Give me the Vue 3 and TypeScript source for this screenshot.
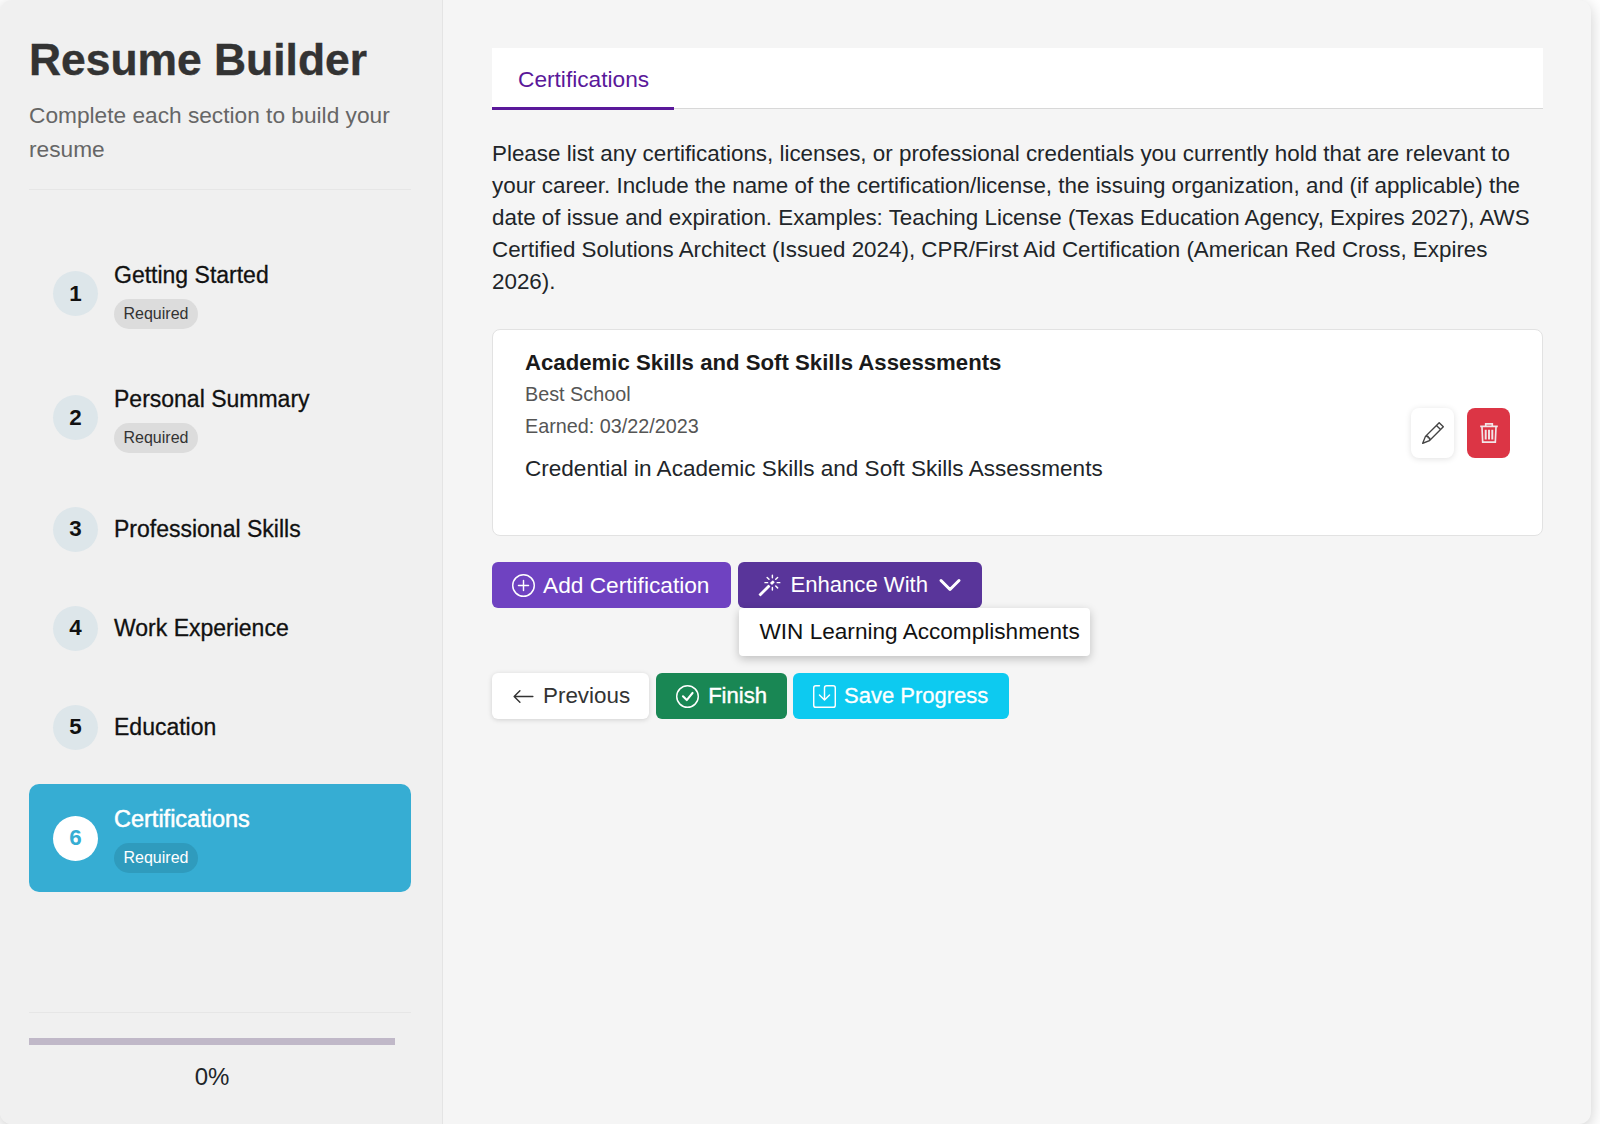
<template>
  <div class="app-card">
    <aside class="sidebar">
      <header class="side-head">
        <h1>Resume Builder</h1>
        <p>Complete each section to build your resume</p>
      </header>

      <nav class="steps">
        <div
          v-for="(step, i) in steps"
          :key="step.title"
          class="step"
          :class="{ active: step.active }"
        >
          <span class="step-num">{{ i + 1 }}</span>
          <div class="step-text">
            <span class="step-title">{{ step.title }}</span>
            <span v-if="step.required" class="badge">Required</span>
          </div>
        </div>
      </nav>

      <div class="side-foot">
        <div class="track"></div>
        <div class="percent">0%</div>
      </div>
    </aside>

    <main class="content">
      <div class="tabs">
        <span class="tab">Certifications</span>
      </div>

      <p class="intro">
        Please list any certifications, licenses, or professional credentials you currently hold that are relevant to your career. Include the name of the certification/license, the issuing organization, and (if applicable) the date of issue and expiration. Examples: Teaching License (Texas Education Agency, Expires 2027), AWS Certified Solutions Architect (Issued 2024), CPR/First Aid Certification (American Red Cross, Expires 2026).
      </p>

      <section class="cert">
        <div class="cert-body">
          <h2>Academic Skills and Soft Skills Assessments</h2>
          <div class="meta">Best School</div>
          <div class="meta">Earned: 03/22/2023</div>
          <p>Credential in Academic Skills and Soft Skills Assessments</p>
        </div>
        <div class="cert-actions">
          <button class="icon-btn edit">
            <svg viewBox="0 0 16 16" width="22" height="22" fill="currentColor"><path d="M12.146.146a.5.5 0 0 1 .708 0l3 3a.5.5 0 0 1 0 .708l-10 10a.5.5 0 0 1-.168.11l-5 2a.5.5 0 0 1-.65-.65l2-5a.5.5 0 0 1 .11-.168zM11.207 2.5 13.5 4.793 14.793 3.5 12.5 1.207zm1.586 3L10.5 3.207 4 9.707V10h.5a.5.5 0 0 1 .5.5v.5h.5a.5.5 0 0 1 .5.5v.5h.293zm-9.761 5.175-.106.106-1.528 3.821 3.821-1.528.106-.106A.5.5 0 0 1 5 12.5V12h-.5a.5.5 0 0 1-.5-.5V11h-.5a.5.5 0 0 1-.468-.325"/></svg>
          </button>
          <button class="icon-btn remove">
            <svg viewBox="0 0 16 16" width="22" height="22" fill="none" stroke="currentColor" stroke-width="1.2"><path d="M1.6 3.2h12.8M5.6 3V1.4h4.8V3M2.9 3.6l.5 11h9.2l.5-11"/><path stroke-width="1.4" d="M5.6 5.6v7.2M8 5.6v7.2M10.4 5.6v7.2"/></svg>
          </button>
        </div>
      </section>

      <div class="row-add">
        <button class="btn add">
          <svg viewBox="0 0 16 16" width="23" height="23" fill="currentColor"><path d="M8 15A7 7 0 1 1 8 1a7 7 0 0 1 0 14m0 1A8 8 0 1 0 8 0a8 8 0 0 0 0 16"/><path d="M8 4a.5.5 0 0 1 .5.5v3h3a.5.5 0 0 1 0 1h-3v3a.5.5 0 0 1-1 0v-3h-3a.5.5 0 0 1 0-1h3v-3A.5.5 0 0 1 8 4"/></svg>
          Add Certification
        </button>
        <div class="enhance">
          <button class="btn enhance-btn">
            <svg viewBox="0 0 16 16" width="23" height="23" fill="currentColor"><path d="M9.5 2.672a.5.5 0 1 0 1 0V.843a.5.5 0 0 0-1 0zm4.5.035A.5.5 0 0 0 13.293 2L12 3.293a.5.5 0 1 0 .707.707zM7.293 4A.5.5 0 1 0 8 3.293L6.707 2A.5.5 0 0 0 6 2.707zm-.621 2.5a.5.5 0 1 0 0-1H4.843a.5.5 0 1 0 0 1zm8.485 0a.5.5 0 1 0 0-1h-1.829a.5.5 0 0 0 0 1zM13.293 10A.5.5 0 1 0 14 9.293L12.707 8a.5.5 0 1 0-.707.707zM9.5 11.157a.5.5 0 0 0 1 0V9.328a.5.5 0 0 0-1 0zm1.854-5.097a.5.5 0 0 0 0-.706l-.708-.708a.5.5 0 0 0-.707 0L8.646 5.94a.5.5 0 0 0 0 .707l.708.708a.5.5 0 0 0 .707 0l1.293-1.293Zm-3 3a.5.5 0 0 0 0-.706l-.708-.708a.5.5 0 0 0-.707 0L.646 13.94a.5.5 0 0 0 0 .707l.708.708a.5.5 0 0 0 .707 0z"/></svg>
            Enhance With
            <svg class="chev" viewBox="0 0 16 16" width="24" height="24" fill="currentColor" stroke="currentColor" stroke-width="1"><path d="M1.646 4.646a.5.5 0 0 1 .708 0L8 10.293l5.646-5.647a.5.5 0 0 1 .708.708l-6 6a.5.5 0 0 1-.708 0l-6-6a.5.5 0 0 1 0-.708"/></svg>
          </button>
          <div class="menu">WIN Learning Accomplishments</div>
        </div>
      </div>

      <div class="row-nav">
        <button class="btn prev">
          <svg viewBox="0 0 16 16" width="23" height="23" fill="currentColor"><path d="M15 8a.5.5 0 0 0-.5-.5H2.707l3.147-3.146a.5.5 0 1 0-.708-.708l-4 4a.5.5 0 0 0 0 .708l4 4a.5.5 0 0 0 .708-.708L2.707 8.5H14.5A.5.5 0 0 0 15 8"/></svg>
          Previous
        </button>
        <button class="btn finish">
          <svg viewBox="0 0 16 16" width="23" height="23" fill="currentColor"><path d="M8 15A7 7 0 1 1 8 1a7 7 0 0 1 0 14m0 1A8 8 0 1 0 8 0a8 8 0 0 0 0 16"/><path d="m10.97 4.97-.02.022-3.473 4.425-2.093-2.094a.75.75 0 0 0-1.06 1.06L6.97 11.03a.75.75 0 0 0 1.079-.02l3.992-4.99a.75.75 0 0 0-1.071-1.05"/></svg>
          Finish
        </button>
        <button class="btn save">
          <svg viewBox="0 0 16 16" width="23" height="23" fill="currentColor"><path d="M2 1a1 1 0 0 0-1 1v12a1 1 0 0 0 1 1h12a1 1 0 0 0 1-1V2a1 1 0 0 0-1-1H9.5a1 1 0 0 0-1 1v7.293l2.646-2.647a.5.5 0 0 1 .708.708l-3.5 3.5a.5.5 0 0 1-.708 0l-3.5-3.5a.5.5 0 1 1 .708-.708L7.5 9.293V2a2 2 0 0 1 2-2H14a2 2 0 0 1 2 2v12a2 2 0 0 1-2 2H2a2 2 0 0 1-2-2V2a2 2 0 0 1 2-2h2.5a.5.5 0 0 1 0 1z"/></svg>
          Save Progress
        </button>
      </div>
    </main>
  </div>
</template>

<script setup lang="ts">
type Step = {
  title: string
  required?: boolean
  active?: boolean
}

const steps: Step[] = [
  { title: 'Getting Started', required: true },
  { title: 'Personal Summary', required: true },
  { title: 'Professional Skills' },
  { title: 'Work Experience' },
  { title: 'Education' },
  { title: 'Certifications', required: true, active: true }
]
</script>

<style>
html,
body {
  margin: 0;
  background: #ffffff;
}
</style>

<style scoped>
.app-card {
  display: flex;
  width: 1591px;
  height: 1124px;
  border-radius: 12px;
  overflow: hidden;
  background: #f5f5f5;
  box-shadow: 0 4px 16px rgba(0, 0, 0, 0.2);
  font-family: "Liberation Sans", Arial, sans-serif;
  color: #212529;
}

.sidebar {
  display: flex;
  flex-direction: column;
  box-sizing: border-box;
  width: 443px;
  flex-shrink: 0;
  padding: 33px 31px 0 29px;
  background: #f0f0f0;
  border-right: 1px solid #e4e4e4;
}

.side-head {
  padding-bottom: 23px;
  border-bottom: 1px solid #e6e6e6;
}

.side-head h1 {
  margin: 0 0 12px;
  font-size: 44.4px;
  line-height: 53px;
  font-weight: 700;
  color: #333333;
  -webkit-text-stroke: 0.4px currentColor;
}

.side-head p {
  margin: 0;
  font-size: 22.7px;
  line-height: 34px;
  color: #666666;
}

.steps {
  display: flex;
  flex-direction: column;
  gap: 15px;
  margin-top: 49px;
}

.step {
  display: flex;
  align-items: center;
  gap: 16px;
  min-height: 84px;
  padding: 0 24px;
  border-radius: 10px;
  color: #111111;
}

.step:has(.badge) {
  min-height: 109px;
}

.step.active {
  min-height: 108px;
}

.step-num {
  display: flex;
  align-items: center;
  justify-content: center;
  width: 45px;
  height: 45px;
  flex-shrink: 0;
  border-radius: 50%;
  background: #dde6ea;
  font-size: 22.4px;
  font-weight: 700;
}

.step-text {
  display: flex;
  flex-direction: column;
  align-items: flex-start;
  gap: 9px;
}

.step-text:has(.badge) {
  padding-top: 1px;
}

.step-title {
  font-size: 23px;
  line-height: 30px;
  -webkit-text-stroke: 0.3px currentColor;
}

.badge {
  padding: 0 9.5px;
  border-radius: 15px;
  background: #dcdcdc;
  font-size: 16px;
  line-height: 30px;
  color: #333333;
}

.step.active {
  background: #36add3;
  color: #ffffff;
}

.active .step-num {
  background: #ffffff;
  color: #36add3;
}

.active .step-title {
  font-size: 23.5px;
  -webkit-text-stroke: 0.5px currentColor;
}

.active .badge {
  background: #2f9bbd;
  color: #ffffff;
}

.side-foot {
  margin-top: auto;
  padding: 25px 0 32px;
  border-top: 1px solid #e6e6e6;
}

.track {
  width: 366px;
  height: 7px;
  background: #c0b8c8;
}

.percent {
  width: 366px;
  margin-top: 17px;
  text-align: center;
  font-size: 24px;
  line-height: 30px;
}

.content {
  flex: 1;
  padding: 48px 48px 0 49px;
  min-width: 0;
}

.tabs {
  display: flex;
  height: 61px;
  box-sizing: border-box;
  background: #ffffff;
  border-bottom: 1px solid #d8d8d8;
}

.tab {
  display: flex;
  align-items: center;
  box-sizing: border-box;
  height: 62px;
  padding: 3px 25px 0 26px;
  border-bottom: 3px solid #5a189a;
  font-size: 22.7px;
  color: #5a189a;
}

.intro {
  margin: 29px 0 0;
  font-size: 22.4px;
  line-height: 32px;
}

.cert {
  display: flex;
  align-items: center;
  justify-content: space-between;
  box-sizing: border-box;
  height: 207px;
  margin-top: 31px;
  padding: 0 32px;
  background: #ffffff;
  border: 1px solid #e2e2e2;
  border-radius: 8px;
}

.cert-body {
  align-self: flex-start;
  padding-top: 20px;
}

.cert-body h2 {
  margin: 0 0 2px;
  font-size: 22.2px;
  line-height: 26px;
  font-weight: 700;
  color: #1a1a1a;
}

.meta {
  font-size: 19.8px;
  line-height: 32px;
  color: #555555;
}

.cert-body p {
  margin: 11px 0 0;
  font-size: 22.56px;
  line-height: 32px;
}

.cert-actions {
  display: flex;
  gap: 13px;
}

.icon-btn {
  display: flex;
  align-items: center;
  justify-content: center;
  width: 43px;
  height: 50px;
  padding: 0;
  border: none;
  border-radius: 8px;
}

.edit {
  background: #ffffff;
  color: #444444;
  box-shadow: 0 1px 6px rgba(0, 0, 0, 0.12);
}

.remove {
  background: #dc3545;
  color: #f2e6e8;
}

.row-add {
  display: flex;
  gap: 7px;
  margin-top: 26px;
}

.row-nav {
  display: flex;
  gap: 7px;
  margin-top: 65px;
}

.btn {
  display: inline-flex;
  align-items: center;
  gap: 9px;
  height: 46px;
  padding: 0 20px;
  border: none;
  border-radius: 6px;
  font-family: inherit;
  font-size: 22.7px;
  color: #ffffff;
}

.add {
  gap: 8px;
  padding-right: 22px;
  background: #6f42c1;
}

.enhance {
  position: relative;
}

.enhance-btn {
  background: #59359a;
  font-size: 22.1px;
}

.chev {
  margin-left: 1px;
}

.menu {
  position: absolute;
  top: 46px;
  left: 1px;
  box-sizing: border-box;
  width: 351px;
  height: 48px;
  padding: 0 10px 0 20px;
  display: flex;
  align-items: center;
  white-space: nowrap;
  background: #ffffff;
  border-radius: 4px;
  box-shadow: 0 3px 10px rgba(0, 0, 0, 0.22);
  font-size: 22.6px;
  color: #111111;
}

.prev {
  gap: 8px;
  padding-right: 19px;
  font-size: 22.4px;
  background: #ffffff;
  color: #333333;
  box-shadow: 0 1px 5px rgba(0, 0, 0, 0.15);
}

.finish {
  padding-right: 20px;
  background: #198754;
  font-size: 22.1px;
  -webkit-text-stroke: 0.4px currentColor;
}

.save {
  gap: 8px;
  margin-left: -1px;
  padding-right: 21px;
  background: #0dcaf0;
  font-size: 22px;
  -webkit-text-stroke: 0.3px currentColor;
}
</style>
